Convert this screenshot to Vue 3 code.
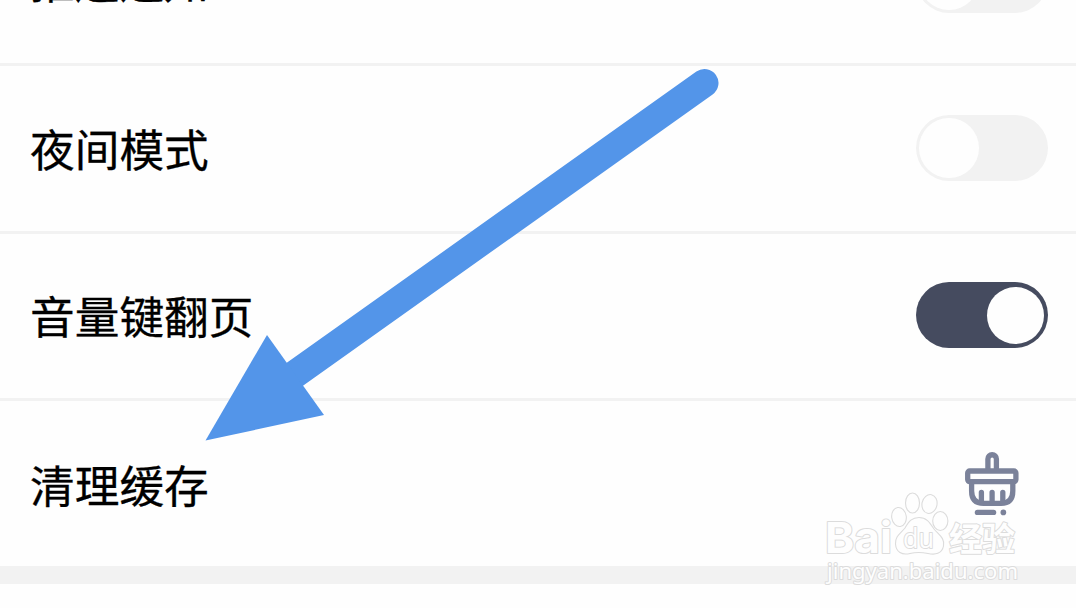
<script setup>
const rows = [
  { label: '推送通知', type: 'switch', on: false },
  { label: '夜间模式', type: 'switch', on: false },
  { label: '音量键翻页', type: 'switch', on: true },
  { label: '清理缓存', type: 'clean' },
]
</script>

<template>
  <main class="screen">
    <section class="list">
      <div v-for="row in rows" :key="row.label" class="row">
        <span class="label">{{ row.label }}</span>
        <span v-if="row.type === 'switch'" class="switch" :class="{ on: row.on }"><i class="knob"></i></span>
        <svg v-else class="brush" width="54" height="64" viewBox="0 0 54 64" fill="none" stroke="#7b829a" stroke-width="5.3" stroke-linecap="round" stroke-linejoin="round">
          <path d="M22.9 18V7a4.25 4.25 0 0 1 8.5 0V18" />
          <rect x="2.7" y="19" width="48.2" height="10.6" rx="2" />
          <path d="M6.6 31V39Q6.6 51.4 18.5 51.4H36Q47.8 51.4 47.8 39V31" />
          <path d="M16.4 40.3V50M27.1 40.3V50M37.8 40.3V50" />
          <path d="M12.4 60.4H28.6" />
          <path d="M38.3 60.4H38.4" stroke-width="5.6" />
        </svg>
      </div>
    </section>
    <div class="band"></div>

    <svg class="overlay" width="1076" height="608" viewBox="0 0 1076 608">
      <path d="M704.5 83L291 377" fill="none" stroke="#5395e9" stroke-width="28" stroke-linecap="round" />
      <path d="M205.5 440.5L267 335L324 415Z" fill="#5395e9" />
      <g class="mark">
        <text x="825" y="552.5" class="latin" textLength="67" lengthAdjust="spacingAndGlyphs">Bai</text>
        <ellipse cx="899" cy="517" rx="7.3" ry="9.6" transform="rotate(-8 899 517)" />
        <ellipse cx="912.5" cy="503" rx="7" ry="10" />
        <ellipse cx="929.5" cy="504" rx="7.5" ry="9.5" transform="rotate(12 929.5 504)" />
        <ellipse cx="940.3" cy="521" rx="7.6" ry="9.5" />
        <path d="M919 517.5C927 517.5 930 523 934 529C939 535 945 538 943.5 546C942 554 935 555 928 553.5C921 552 916 552 910 553.5C902 555.5 896 552 895.5 544C895 536 901 533 905 528C909 521 912 517.5 919 517.5Z" />
        <text x="903" y="547.5" class="du" textLength="31" lengthAdjust="spacingAndGlyphs">du</text>
        <text x="949" y="550.5" class="cjk" textLength="66" lengthAdjust="spacingAndGlyphs">经验</text>
        <text x="827" y="578.5" class="url" textLength="191" lengthAdjust="spacingAndGlyphs">jingyan.baidu.com</text>
      </g>
    </svg>
  </main>
</template>

<style>
html, body { margin: 0; background: #fefefe; }
</style>

<style scoped>
.screen {
  position: relative;
  width: 1076px;
  height: 608px;
  overflow: hidden;
  background: #fefefe;
  font-family: "Noto Sans CJK SC", sans-serif;
}
.list { margin-top: -102px; }
.row {
  box-sizing: border-box;
  height: 168px;
  padding: 0 28px 2px 30px;
  display: flex;
  align-items: center;
  justify-content: space-between;
  border-bottom: 3px solid #f2f2f2;
}
.row:nth-child(3) { height: 167px; }
.row:last-child { height: 165px; padding-bottom: 0; border-bottom: 0; }
.label {
  font-size: 44.7px;
  line-height: 60px;
  color: #000;
  -webkit-text-stroke: 0.3px #000;
}
.switch {
  box-sizing: border-box;
  width: 132px;
  height: 66px;
  padding: 3px;
  border-radius: 33px;
  background: #f2f2f2;
  display: flex;
  align-items: center;
}
.knob {
  width: 60px;
  height: 60px;
  border-radius: 50%;
  background: #fefefe;
}
.switch.on { background: #454b5f; justify-content: flex-end; padding-right: 4px; }
.switch.on .knob { width: 57px; height: 57px; }
.brush { margin-right: 29px; }
.band { height: 18px; background: #f2f2f2; }
.overlay { position: absolute; left: 0; top: 0; }
.mark { fill: #fefefe; stroke: #dcdcdc; stroke-width: 1.1; stroke-linejoin: round; }
.mark text { paint-order: stroke; stroke-width: 2; }
.latin { font: 700 43px Inter, sans-serif; }
.du { font: 400 28px "Open Sans", sans-serif; }
.cjk { font: 700 33px "Noto Sans CJK SC", sans-serif; }
.url { font: 400 22px "Noto Sans", sans-serif; }
</style>
